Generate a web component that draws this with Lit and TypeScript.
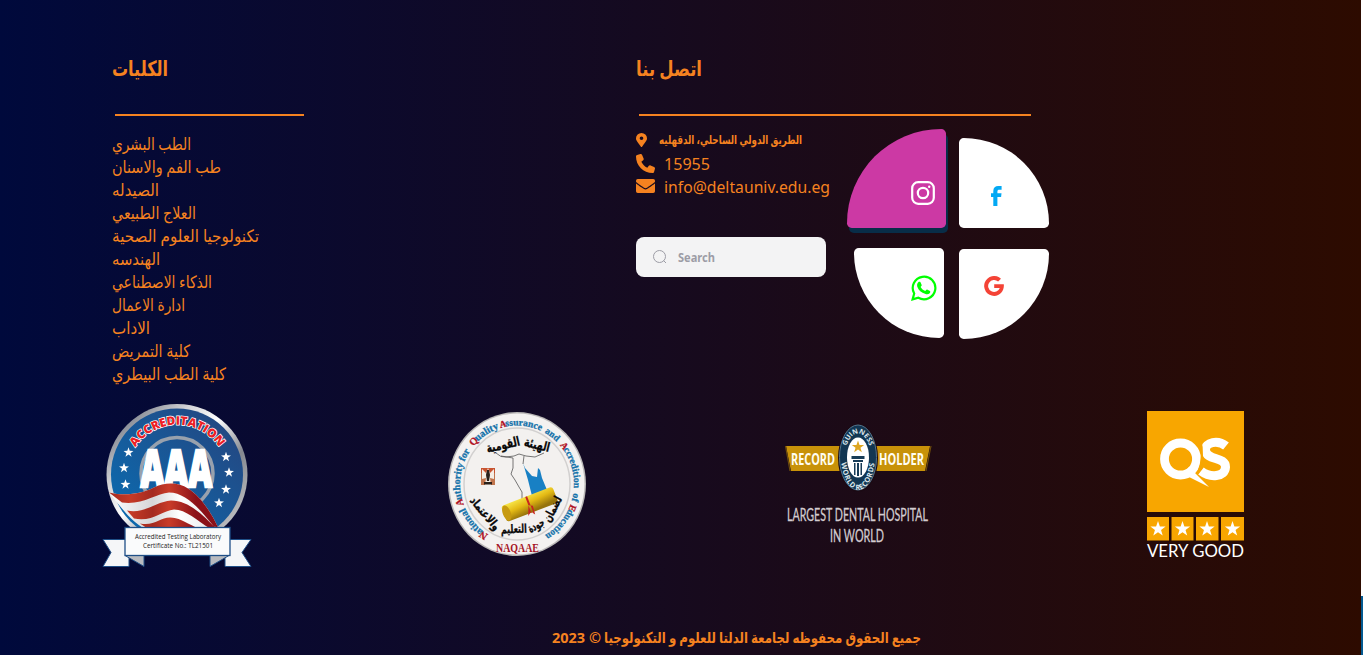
import { LitElement, html, css, svg } from "lit";
import { customElement, property } from "lit/decorators.js";

const star = (x: number, y: number, r: number, fill = "#fff") => {
  const pts = Array.from({ length: 10 }, (_, i) => {
    const a = (Math.PI / 5) * i - Math.PI / 2;
    const q = i % 2 ? r * 0.4 : r;
    return `${(x + q * Math.cos(a)).toFixed(2)},${(y + q * Math.sin(a)).toFixed(2)}`;
  }).join(" ");
  return svg`<polygon points=${pts} fill=${fill} />`;
};

/** A single line of text fitted to a fixed advance width. */
@customElement("fit-text")
class FitText extends LitElement {
  @property() text = "";
  @property({ type: Number }) width = 100;
  @property({ type: Number }) size = 17;
  @property({ type: Number }) height = 23;
  @property({ type: Number }) base = 17;
  @property() weight = "400";
  @property() color = "#f58220";
  static styles = css`
    :host { display: block; flex: none; }
    svg { display: block; overflow: visible; font-family: "Noto Sans", "DejaVu Sans", sans-serif; }
  `;
  render() {
    return html`<svg width=${this.width} height=${this.height}>
      <text x="0" y=${this.base} font-size=${this.size} font-weight=${this.weight} fill=${this.color}
        textLength=${this.width} lengthAdjust="spacingAndGlyphs">${this.text}</text></svg>`;
  }
}

const faculties: [string, number][] = [
  ["الطب البشري", 79], ["طب الفم والاسنان", 109], ["الصيدله", 47], ["العلاج الطبيعي", 84],
  ["تكنولوجيا العلوم الصحية", 147], ["الهندسه", 48], ["الذكاء الاصطناعي", 100],
  ["ادارة الاعمال", 73], ["الاداب", 38], ["كلية التمريض", 78], ["كلية الطب البيطري", 114],
];

const pin = svg`<svg width="11" height="14" viewBox="0 0 384 512" preserveAspectRatio="none"><path fill="#f58220" d="M172 502C27 291 0 270 0 192a192 192 0 0 1 384 0c0 78-27 99-172 310a24 24 0 0 1-40 0zM192 256a64 64 0 1 0 0-128 64 64 0 0 0 0 128z"/></svg>`;
const phone = svg`<svg width="19" height="19" viewBox="0 0 512 512"><path fill="#f58220" d="M164.900 24.600c-7.700-18.600-28-28.500-47.400-23.200l-88 24C12.100 30.200 0 46 0 64c0 247.400 200.600 448 448 448 18 0 33.800-12.100 38.600-29.500l24-88c5.300-19.400-4.600-39.700-23.200-47.400l-96-40c-16.300-6.800-35.200-2.100-46.300 11.600L304.700 368C234.300 334.700 177.300 277.700 144 207.300L193.300 167c13.700-11.200 18.400-30 11.600-46.300l-40-96z"/></svg>`;
const mail = svg`<svg class="mail" width="19" height="14" viewBox="0 64 512 384" preserveAspectRatio="none"><path fill="#f58220" d="M502 191c4-3 10 0 10 5v204a48 48 0 0 1-48 48H48a48 48 0 0 1-48-48V196c0-5 6-8 10-5 22 17 52 40 155 114 21 16 57 48 91 48s72-33 91-48c103-74 133-97 155-114zM256 320c23 0 57-29 74-41 133-97 143-105 173-129 6-4 9-11 9-18v-20a48 48 0 0 0-48-48H48a48 48 0 0 0-48 48v20c0 7 3 14 9 18 30 24 40 32 173 129 17 12 51 41 74 41z"/></svg>`;

const insta = svg`<svg width="24" height="24" viewBox="0 0 24 24" fill="none" stroke="#fff" stroke-width="2.200"><rect x="1.200" y="1.200" width="21.600" height="21.600" rx="6"/><circle cx="12" cy="12" r="5.200"/><circle cx="18.200" cy="5.800" r="1.200" fill="#fff" stroke="none"/></svg>`;
const facebook = svg`<svg width="11" height="20" viewBox="0 0 11 20"><path fill="#03a9f4" d="M2.300 20V11H0V7.300h2.300V5.100C2.300 1.900 4.300.1 7.300.1h3.300v3.700H8.300c-1.400 0-1.900.5-1.900 1.700v1.800h4.100L10.100 11H6.400v9z"/></svg>`;
const whatsapp = svg`<svg width="26" height="26" viewBox="0 0 26 26"><path d="M1.600 24.400 3.200 18.500A11.300 11.300 0 1 1 7.300 22.700z" fill="none" stroke="#0f0" stroke-width="2.200"/><path fill="#0f0" d="M7.500 7c.5-.4 1.600-.5 2 .2l1.200 2.800c.2.600-.6 1.300-1.100 1.900 1.100 1.900 2.600 3.200 4.700 4 .6-.6 1.200-1.500 1.800-1.300l2.800 1.400c.7.400.3 1.600-.2 2.200-.9 1-2.500 1.300-4.100.8-4.500-1.300-7-3.800-8.300-7.300-.6-2 0-3.700 1.200-4.700z"/></svg>`;
const google = svg`<svg width="20" height="20" viewBox="0 0 20 20"><path fill="#f44336" d="M10.200 8.200H19.800C20.500 14.500 16.500 20 10.200 20A10 10 0 1 1 17 2.700L14.100 5.500A6 6 0 1 0 15.800 12h-5.600z"/></svg>`;

const aaa = svg`<svg width="150" height="168" viewBox="0 -1.500 150 168" font-family="Open Sans, sans-serif">
  <defs>
    <linearGradient id="ring" x1="0" y1="0" x2="1" y2="1"><stop offset=".1" stop-color="#777c87"/><stop offset=".3" stop-color="#d4d5d8"/><stop offset=".45" stop-color="#fff"/><stop offset=".65" stop-color="#85888f"/><stop offset="1" stop-color="#ddd"/></linearGradient>
    <linearGradient id="disc" x1="0" y1="1" x2="1" y2="0"><stop stop-color="#086fb5"/><stop offset="1" stop-color="#27437c"/></linearGradient>
    <linearGradient id="red"><stop stop-color="#a52a20"/><stop offset=".2" stop-color="#c53a26"/><stop offset=".4" stop-color="#a42a20"/><stop offset=".55" stop-color="#c93c29"/><stop offset=".8" stop-color="#8b1119"/><stop offset="1" stop-color="#8b1119"/></linearGradient>
    <linearGradient id="white"><stop stop-color="#fff"/><stop offset=".4" stop-color="#d6d6d8"/><stop offset=".65" stop-color="#fff"/><stop offset="1" stop-color="#e6e6e8"/></linearGradient>
  </defs>
  <circle cx="75" cy="71" r="70.500" fill="url(#ring)"/>
  <circle cx="75" cy="71" r="66" fill="url(#disc)"/>
  <circle cx="75" cy="70" r="36" fill="none" stroke="#98a1ad" stroke-width="3.500"/>
  <path id="acc" d="M31.500 47A50 50 0 0 1 119 47" fill="none"/>
  <text font-size="12" font-weight="800" fill="#ed2024" stroke="#fff" stroke-width="1.400" paint-order="stroke" text-anchor="middle"><textPath href="#acc" startOffset="50%">ACCREDITATION</textPath></text>
  ${[[26.500, 49], [22, 64.500], [23.500, 81], [124, 53.500], [127, 69], [124, 86], [117, 99.500]].map(([x, y]) => star(x, y, 5.200))}
  <text x="38.500" y="83.500" font-size="52" font-weight="800" fill="#fff" stroke="#fff" stroke-width="2.400" textLength="71.500" lengthAdjust="spacingAndGlyphs">AAA</text>
  <path d="M7 89C24 93 40 90 52 84C62 79 76 78 86 85C98 92 110 110 116 124V127H47C32 122 20 105 7 89Z" fill="url(#white)"/>
  <path d="M7 89C24 93 40 90 52 84C62 79 76 78 86 85C98 92 110 110 116 124L112 123C98 106 84 89 67 89C54 90 40 102 20 99ZM25 107C42 111 54 98 69 97C88 97 103 114 114 125H108C95 117 84 106 72 106C60 107 50 119 32 115ZM38 120C52 123 58 114 68 114C76 114 82 118 94 124H74C64 122 58 127 47 126Z" fill="url(#red)"/>
  <path d="M1 136H27V163H1L9 149ZM149 136H123V163H149L140 149Z" fill="#f5f6f8" stroke="#1f4f87"/>
  <path d="M23 152H42V163ZM127 152H108V163Z" fill="#b8babf" stroke="#1f4f87"/>
  <rect x="23" y="124" width="105" height="28" fill="#fafbfc" stroke="#1f4f87" stroke-width="1.300"/>
  <g fill="#222" font-size="6.800"><text x="33" y="135.500" textLength="86" lengthAdjust="spacingAndGlyphs">Accredited Testing Laboratory</text><text x="41" y="144.500" textLength="70" lengthAdjust="spacingAndGlyphs">Certificate No.: TL21501</text></g>
</svg>`;

const ringWord = (t: string, off: number, size = 9.8) => {
  const cap = t[0] !== t[0].toLowerCase();
  return cap
    ? svg`<text font-size=${size}><textPath href="#outer" startOffset=${off}><tspan fill="#b01224" stroke="#b01224">${t[0]}</tspan><tspan dx="-1.200">${t.slice(1)}</tspan></textPath></text>`
    : svg`<text font-size=${size}><textPath href="#outer" startOffset=${off}>${t}</textPath></text>`;
};

const naqaae = svg`<svg width="138" height="144" viewBox="0 0 138 144" font-family="Liberation Serif, serif">
  <defs>
    <path id="outer" d="M69 130.500A57 58.500 0 1 1 69.100 130.500"/>
    <linearGradient id="roll" x1="0" y1="0" x2=".3" y2="1"><stop stop-color="#f9e94d"/><stop offset=".5" stop-color="#e3b914"/><stop offset="1" stop-color="#96730b"/></linearGradient>
  </defs>
  <ellipse cx="69" cy="72" rx="69" ry="72" fill="#bbb9b8"/>
  <ellipse cx="69" cy="72" rx="67.500" ry="70.500" fill="#f4f2f1"/>
  <ellipse cx="69" cy="72" rx="53" ry="56" fill="#f3f1ef" stroke="#d2d0cf" stroke-width="1.500"/>
  <g fill="#1672aa" font-weight="700" stroke-width=".3" stroke="#1672aa">
    ${ringWord("National", 30, 10.2)}${ringWord("Authority", 69, 10.2)}${ringWord("for", 113)}
    ${ringWord("Quality", 131, 10.2)}${ringWord("Assurance", 164, 9.6)}${ringWord("and", 209.5, 9.4)}
    ${ringWord("Accredition", 229, 9.6)}${ringWord("of", 280.5)}${ringWord("Education", 292, 9.6)}
  </g>
  <text x="48" y="139.500" font-size="13.500" font-weight="700" fill="#a51527" textLength="43" lengthAdjust="spacingAndGlyphs">NAQAAE</text>
  <path d="M48 41Q53 46 58 45L66 44L71 42L78 44L87 45L96 41M53 44L65 46V56L63 62L67 68L71 75L74 80V90M76 44L75 52" fill="none" stroke="#555" stroke-width=".8"/>
  <path d="M75 51 77 56 84 64 89 65 90 56 92 58 94 66 99 78 84 84 80 68Z" fill="#1880c4"/>
  <path d="M33 56H47V73H33Z" fill="#c0754d"/><path d="M33 56H47V61H33Z" fill="#c85430"/><path d="M34 57 38 61 40 56 42 61 46 57V67L42 66 43 73H37L38 66 34 67Z" fill="#f6eee5"/><path d="M39 58h2l1 5-1 6h-2l-1-6z" fill="#2b211b"/><path d="M36 70h8v2.500h-8z" fill="#2b211b"/>
  <g transform="rotate(-21 81 92)"><rect x="54" y="84" width="55" height="17" rx="3" fill="url(#roll)"/><ellipse cx="57" cy="92.500" rx="4" ry="8" fill="#c79a10"/><path d="M80 84h2v17h-2zM80 93l-4 10 4-3 3 4 1-9z" fill="#c82420"/></g>
  <g font-family="DejaVu Sans, sans-serif" font-weight="700" fill="#080808" text-anchor="middle" font-size="12" stroke="#080808" stroke-width=".3">
    <text x="88" y="37" font-size="13" transform="rotate(14 88 37)" textLength="26" lengthAdjust="spacingAndGlyphs">الهيئة</text>
    <text x="56" y="37" font-size="13" transform="rotate(-13 56 37)" textLength="34" lengthAdjust="spacingAndGlyphs">القومية</text>
    <text x="108" y="99" transform="rotate(-62 108 99)" textLength="27" lengthAdjust="spacingAndGlyphs">لضمان</text>
    <text x="90" y="117" transform="rotate(-28 90 117)" textLength="17" lengthAdjust="spacingAndGlyphs">جودة</text>
    <text x="66" y="121" transform="rotate(-2 66 121)" textLength="26" lengthAdjust="spacingAndGlyphs">التعليم</text>
    <text x="34" y="104" transform="rotate(50 34 104)" textLength="40" lengthAdjust="spacingAndGlyphs">والاعتماد</text>
  </g>
</svg>`;

const guinness = svg`<svg width="150" height="125" viewBox="0 0 150 125" font-family="Open Sans, sans-serif">
  <path d="M2 22H72V47H7ZM146 22H77V47H141Z" fill="#c89209"/>
  <path d="M1.500 22 6 47M147 22 142 47" stroke="#6c4b0c" stroke-width="1.200"/>
  <g fill="#fffdf2" font-size="16.500" font-weight="700"><text x="7" y="40.500" textLength="44" lengthAdjust="spacingAndGlyphs">RECORD</text><text x="95" y="40.500" textLength="45" lengthAdjust="spacingAndGlyphs">HOLDER</text></g>
  <ellipse cx="74" cy="34" rx="20" ry="34" fill="#1b0a14"/>
  <ellipse cx="74" cy="33.500" rx="18.500" ry="32.500" fill="#123652" stroke="#54748b"/>
  <ellipse cx="74" cy="33.500" rx="11" ry="20" fill="#fff"/>
  <path id="g1" d="M61 34A13 24.500 0 0 1 87 34" fill="none"/><path id="g2" d="M57 30C57 78 91 78 91 30" fill="none"/>
  <g fill="#dae5eb" font-weight="700" text-anchor="middle"><text font-size="7"><textPath href="#g1" startOffset="50%">GUINNESS</textPath></text>
  <text font-size="7.300" letter-spacing=".5"><textPath href="#g2" startOffset="50%">WORLD RECORDS</textPath></text></g>
  ${star(74, 23, 6.500, "#dda622")}
  <path d="M67.500 32h13v3h-13zM69 36h10v2H69zM70 39h1.500v12H70zM73 39h2v13h-2zM76.500 39h1.500v12h-1.500z" fill="#183c57"/>
  <g fill="#d3ccd0" stroke="#d3ccd0" stroke-width=".3" font-family="Lato, sans-serif" font-size="18" font-weight="400"><text x="3" y="96.500" textLength="141" lengthAdjust="spacingAndGlyphs">LARGEST DENTAL HOSPITAL</text><text x="46" y="118" textLength="54" lengthAdjust="spacingAndGlyphs">IN WORLD</text></g>
</svg>`;

const qs = svg`<svg width="98" height="148" viewBox="0 0 98 148" font-family="Lato, sans-serif">
  <path fill="#f8a600" d="M0 0H97V101H0ZM0 106H22V129.500H0ZM24.500 106H46.500V129.500H24.500ZM49 106H71.500V129.500H49ZM74 106H97V129.500H74Z"/>
  <circle cx="33.500" cy="48" r="16" fill="none" stroke="#fff" stroke-width="8.800"/>
  <path d="M79 35C71 28.500 58 31 58.500 39C59 50 78.500 45 78.500 56C78 66.500 63 67 54 60" fill="none" stroke="#fff" stroke-width="9"/>
  <path d="M53 28Q58 45 51 62" fill="none" stroke="#f8a600" stroke-width="2"/>
  <path d="M42 56 52 66 62 76 36 63Z" fill="#fff"/>
  ${[11, 35.500, 60, 85.500].map((x) => star(x, 118, 8))}
  <text x="0" y="146" font-size="16.500" fill="#fff" textLength="97" lengthAdjust="spacingAndGlyphs">VERY GOOD</text>
</svg>`;

@customElement("app-root")
class AppRoot extends LitElement {
  static styles = css`
    :host { display: block; }
    * { box-sizing: border-box; }
    .page { display: flex; height: 655px; overflow: hidden; font-family: "Noto Sans", sans-serif; color: #f58220; }
    .footer { width: 1361px; height: 655px; display: flex; flex-direction: column; background: linear-gradient(to right, #00093c, #2d0b00); }
    .edge { width: 2px; background: linear-gradient(#fff 596px, #035a91 596px); }
    .top { display: grid; grid-template-columns: 524px 1fr; padding: 56px 0 0 112px; height: 402px; }
    .rule { height: 2px; background: #f58220; margin: 28px 0 0 3px; }
    .rule.a { width: 189px; } .rule.b { width: 392px; }
    .list { padding-top: 17px; }
    .contact { display: flex; }
    .info { width: 211px; padding-top: 12px; }
    .row { display: flex; align-items: center; height: 23px; }
    .row.first { height: 24px; gap: 12px; }
    .row.other { gap: 9px; }
    .mail { margin-bottom: 1px; }
    .search { display: flex; align-items: center; width: 190px; height: 40px; margin-top: 39px; padding-left: 17px; gap: 10px; border-radius: 8px; background: #f3f3f4; }
    .wheel { display: grid; grid-template-columns: 99px 90px; column-gap: 13px; padding-top: 13px; align-content: start; }
    .q { display: grid; background: #fff; width: 90px; height: 90px; place-items: center; }
    .tl { width: 99px; height: 99px; border-radius: 99px 5px 5px 5px; background: #cc39a4; box-shadow: 2px 5px 0 #082d48; padding: 28px 0 0 53px; }
    .tr { margin-top: 9px; border-radius: 5px 90px 5px 5px; padding: 26px 16px 0 0; }
    .bl { margin: 20px 0 0 7px; border-radius: 5px 5px 5px 90px; padding: 0 0 10px 50px; }
    .br { margin-top: 21px; border-radius: 5px 5px 90px 5px; padding: 0 20px 16px 0; }
    .badges { display: flex; height: 225px; }
    .badges svg { display: block; flex: none; overflow: visible; }
    .b1 { width: 346px; padding-left: 102px; }
    .b2 { width: 336px; padding: 10px 0 0 102px; }
    .b3 { width: 364px; padding: 22px 0 0 102px; }
    .b4 { padding: 9px 0 0 101px; }
    .copy { display: flex; gap: 3px; padding-left: 552px; }
  `;
  render() {
    return html`<div class="page"><div class="footer">
      <div class="top">
        <section>
          <fit-text text="الكليات" width="56" size="21" height="30" base="20" weight="700"></fit-text>
          <div class="rule a"></div>
          <div class="list">${faculties.map(([t, w]) => html`<fit-text .text=${t} .width=${w}></fit-text>`)}</div>
        </section>
        <section>
          <fit-text text="اتصل بنا" width="66" size="21" height="30" base="20" weight="700"></fit-text>
          <div class="rule b"></div>
          <div class="contact">
            <div class="info">
              <div class="row first">${pin}<fit-text text="الطريق الدولي الساحلي، الدقهليه" width="143" size="12" height="20" base="14" weight="700"></fit-text></div>
              <div class="row other">${phone}<fit-text text="15955" width="46" size="17" height="23" base="18"></fit-text></div>
              <div class="row other">${mail}<fit-text text="info@deltauniv.edu.eg" width="166" size="17" height="23" base="18"></fit-text></div>
              <div class="search">
                <svg width="15" height="15" viewBox="0 0 15 15" fill="none" stroke="#9d9da6"><circle cx="6.500" cy="6.500" r="6"/><path d="m10.500 10.500 2.500 2.500"/></svg>
                <fit-text text="Search" width="37" size="12" height="18" base="14" weight="700" color="#9d9da6"></fit-text>
              </div>
            </div>
            <div class="wheel">
              <div class="q tl">${insta}</div><div class="q tr">${facebook}</div>
              <div class="q bl">${whatsapp}</div><div class="q br">${google}</div>
            </div>
          </div>
        </section>
      </div>
      <div class="badges"><div class="b1">${aaa}</div><div class="b2">${naqaae}</div><div class="b3">${guinness}</div><div class="b4">${qs}</div></div>
      <div class="copy">
        <fit-text text="2023 ©" width="49" size="14.500" height="24" base="15.500" weight="700"></fit-text>
        <fit-text text="جميع الحقوق محفوظه لجامعة الدلتا للعلوم و التكنولوجيا" width="317" size="15" height="24" base="15.500" weight="700"></fit-text>
      </div>
    </div><div class="edge"></div></div>`;
  }
}
